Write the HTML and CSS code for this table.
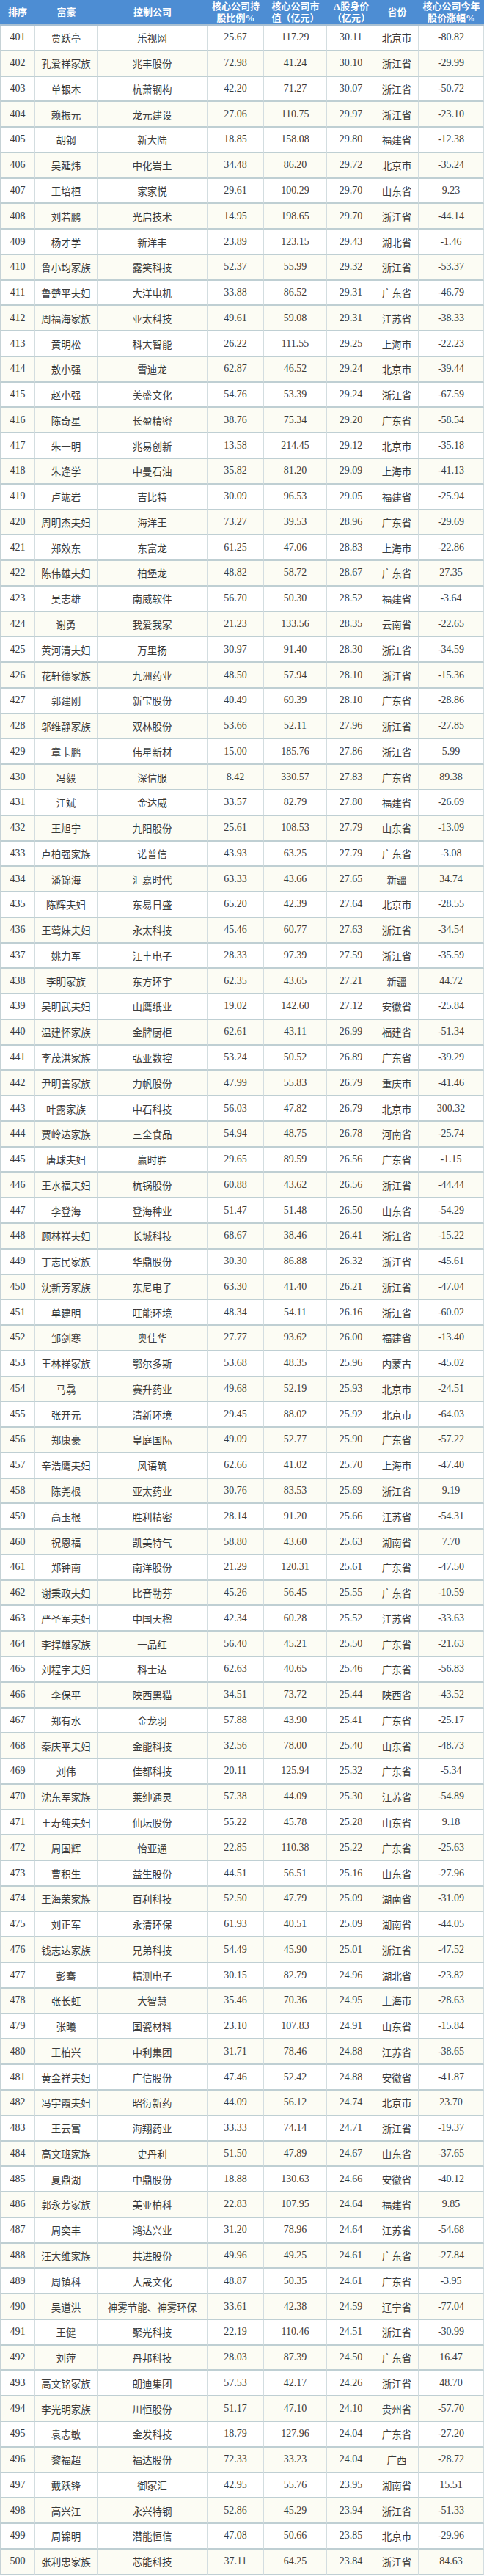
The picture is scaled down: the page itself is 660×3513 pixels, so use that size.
FILE: index.html
```html
<!DOCTYPE html>
<html lang="zh-CN">
<head>
<meta charset="utf-8">
<title>富豪榜 401-500</title>
<link rel="stylesheet" href="styles.css">
</head>
<body>
<table class="rank">
<colgroup>
<col class="c1"><col class="c2"><col class="c3"><col class="c4"><col class="c5"><col class="c6"><col class="c7"><col class="c8">
</colgroup>
<thead>
<tr><th>排序</th><th>富豪</th><th>控制公司</th><th>核心公司持<br>股比例%</th><th>核心公司市<br>值（亿元）</th><th>A股身价<br>（亿元）</th><th>省份</th><th>核心公司今年<br>股价涨幅%</th></tr>
</thead>
<tbody>
<tr><td>401</td><td>贾跃亭</td><td>乐视网</td><td>25.67</td><td>117.29</td><td>30.11</td><td>北京市</td><td>-80.82</td></tr>
<tr><td>402</td><td>孔爱祥家族</td><td>兆丰股份</td><td>72.98</td><td>41.24</td><td>30.10</td><td>浙江省</td><td>-29.99</td></tr>
<tr><td>403</td><td>单银木</td><td>杭萧钢构</td><td>42.20</td><td>71.27</td><td>30.07</td><td>浙江省</td><td>-50.72</td></tr>
<tr><td>404</td><td>赖振元</td><td>龙元建设</td><td>27.06</td><td>110.75</td><td>29.97</td><td>浙江省</td><td>-23.10</td></tr>
<tr><td>405</td><td>胡钢</td><td>新大陆</td><td>18.85</td><td>158.08</td><td>29.80</td><td>福建省</td><td>-12.38</td></tr>
<tr><td>406</td><td>吴延炜</td><td>中化岩土</td><td>34.48</td><td>86.20</td><td>29.72</td><td>北京市</td><td>-35.24</td></tr>
<tr><td>407</td><td>王培桓</td><td>家家悦</td><td>29.61</td><td>100.29</td><td>29.70</td><td>山东省</td><td>9.23</td></tr>
<tr><td>408</td><td>刘若鹏</td><td>光启技术</td><td>14.95</td><td>198.65</td><td>29.70</td><td>浙江省</td><td>-44.14</td></tr>
<tr><td>409</td><td>杨才学</td><td>新洋丰</td><td>23.89</td><td>123.15</td><td>29.43</td><td>湖北省</td><td>-1.46</td></tr>
<tr><td>410</td><td>鲁小均家族</td><td>露笑科技</td><td>52.37</td><td>55.99</td><td>29.32</td><td>浙江省</td><td>-53.37</td></tr>
<tr><td>411</td><td>鲁楚平夫妇</td><td>大洋电机</td><td>33.88</td><td>86.52</td><td>29.31</td><td>广东省</td><td>-46.79</td></tr>
<tr><td>412</td><td>周福海家族</td><td>亚太科技</td><td>49.61</td><td>59.08</td><td>29.31</td><td>江苏省</td><td>-38.33</td></tr>
<tr><td>413</td><td>黄明松</td><td>科大智能</td><td>26.22</td><td>111.55</td><td>29.25</td><td>上海市</td><td>-22.23</td></tr>
<tr><td>414</td><td>敖小强</td><td>雪迪龙</td><td>62.87</td><td>46.52</td><td>29.24</td><td>北京市</td><td>-39.44</td></tr>
<tr><td>415</td><td>赵小强</td><td>美盛文化</td><td>54.76</td><td>53.39</td><td>29.24</td><td>浙江省</td><td>-67.59</td></tr>
<tr><td>416</td><td>陈奇星</td><td>长盈精密</td><td>38.76</td><td>75.34</td><td>29.20</td><td>广东省</td><td>-58.54</td></tr>
<tr><td>417</td><td>朱一明</td><td>兆易创新</td><td>13.58</td><td>214.45</td><td>29.12</td><td>北京市</td><td>-35.18</td></tr>
<tr><td>418</td><td>朱逢学</td><td>中曼石油</td><td>35.82</td><td>81.20</td><td>29.09</td><td>上海市</td><td>-41.13</td></tr>
<tr><td>419</td><td>卢竑岩</td><td>吉比特</td><td>30.09</td><td>96.53</td><td>29.05</td><td>福建省</td><td>-25.94</td></tr>
<tr><td>420</td><td>周明杰夫妇</td><td>海洋王</td><td>73.27</td><td>39.53</td><td>28.96</td><td>广东省</td><td>-29.69</td></tr>
<tr><td>421</td><td>郑效东</td><td>东富龙</td><td>61.25</td><td>47.06</td><td>28.83</td><td>上海市</td><td>-22.86</td></tr>
<tr><td>422</td><td>陈伟雄夫妇</td><td>柏堡龙</td><td>48.82</td><td>58.72</td><td>28.67</td><td>广东省</td><td>27.35</td></tr>
<tr><td>423</td><td>吴志雄</td><td>南威软件</td><td>56.70</td><td>50.30</td><td>28.52</td><td>福建省</td><td>-3.64</td></tr>
<tr><td>424</td><td>谢勇</td><td>我爱我家</td><td>21.23</td><td>133.56</td><td>28.35</td><td>云南省</td><td>-22.65</td></tr>
<tr><td>425</td><td>黄河清夫妇</td><td>万里扬</td><td>30.97</td><td>91.40</td><td>28.30</td><td>浙江省</td><td>-34.59</td></tr>
<tr><td>426</td><td>花轩德家族</td><td>九洲药业</td><td>48.50</td><td>57.94</td><td>28.10</td><td>浙江省</td><td>-15.36</td></tr>
<tr><td>427</td><td>郭建刚</td><td>新宝股份</td><td>40.49</td><td>69.39</td><td>28.10</td><td>广东省</td><td>-28.86</td></tr>
<tr><td>428</td><td>邬维静家族</td><td>双林股份</td><td>53.66</td><td>52.11</td><td>27.96</td><td>浙江省</td><td>-27.85</td></tr>
<tr><td>429</td><td>章卡鹏</td><td>伟星新材</td><td>15.00</td><td>185.76</td><td>27.86</td><td>浙江省</td><td>5.99</td></tr>
<tr><td>430</td><td>冯毅</td><td>深信服</td><td>8.42</td><td>330.57</td><td>27.83</td><td>广东省</td><td>89.38</td></tr>
<tr><td>431</td><td>江斌</td><td>金达威</td><td>33.57</td><td>82.79</td><td>27.80</td><td>福建省</td><td>-26.69</td></tr>
<tr><td>432</td><td>王旭宁</td><td>九阳股份</td><td>25.61</td><td>108.53</td><td>27.79</td><td>山东省</td><td>-13.09</td></tr>
<tr><td>433</td><td>卢柏强家族</td><td>诺普信</td><td>43.93</td><td>63.25</td><td>27.79</td><td>广东省</td><td>-3.08</td></tr>
<tr><td>434</td><td>潘锦海</td><td>汇嘉时代</td><td>63.33</td><td>43.66</td><td>27.65</td><td>新疆</td><td>34.74</td></tr>
<tr><td>435</td><td>陈辉夫妇</td><td>东易日盛</td><td>65.20</td><td>42.39</td><td>27.64</td><td>北京市</td><td>-28.55</td></tr>
<tr><td>436</td><td>王莺妹夫妇</td><td>永太科技</td><td>45.46</td><td>60.77</td><td>27.63</td><td>浙江省</td><td>-34.54</td></tr>
<tr><td>437</td><td>姚力军</td><td>江丰电子</td><td>28.33</td><td>97.39</td><td>27.59</td><td>浙江省</td><td>-35.59</td></tr>
<tr><td>438</td><td>李明家族</td><td>东方环宇</td><td>62.35</td><td>43.65</td><td>27.21</td><td>新疆</td><td>44.72</td></tr>
<tr><td>439</td><td>吴明武夫妇</td><td>山鹰纸业</td><td>19.02</td><td>142.60</td><td>27.12</td><td>安徽省</td><td>-25.84</td></tr>
<tr><td>440</td><td>温建怀家族</td><td>金牌厨柜</td><td>62.61</td><td>43.11</td><td>26.99</td><td>福建省</td><td>-51.34</td></tr>
<tr><td>441</td><td>李茂洪家族</td><td>弘亚数控</td><td>53.24</td><td>50.52</td><td>26.89</td><td>广东省</td><td>-39.29</td></tr>
<tr><td>442</td><td>尹明善家族</td><td>力帆股份</td><td>47.99</td><td>55.83</td><td>26.79</td><td>重庆市</td><td>-41.46</td></tr>
<tr><td>443</td><td>叶露家族</td><td>中石科技</td><td>56.03</td><td>47.82</td><td>26.79</td><td>北京市</td><td>300.32</td></tr>
<tr><td>444</td><td>贾岭达家族</td><td>三全食品</td><td>54.94</td><td>48.75</td><td>26.78</td><td>河南省</td><td>-25.74</td></tr>
<tr><td>445</td><td>唐球夫妇</td><td>赢时胜</td><td>29.65</td><td>89.59</td><td>26.56</td><td>广东省</td><td>-1.15</td></tr>
<tr><td>446</td><td>王水福夫妇</td><td>杭锅股份</td><td>60.88</td><td>43.62</td><td>26.56</td><td>浙江省</td><td>-44.44</td></tr>
<tr><td>447</td><td>李登海</td><td>登海种业</td><td>51.47</td><td>51.48</td><td>26.50</td><td>山东省</td><td>-54.29</td></tr>
<tr><td>448</td><td>顾林祥夫妇</td><td>长城科技</td><td>68.67</td><td>38.46</td><td>26.41</td><td>浙江省</td><td>-15.22</td></tr>
<tr><td>449</td><td>丁志民家族</td><td>华鼎股份</td><td>30.30</td><td>86.88</td><td>26.32</td><td>浙江省</td><td>-45.61</td></tr>
<tr><td>450</td><td>沈新芳家族</td><td>东尼电子</td><td>63.30</td><td>41.40</td><td>26.21</td><td>浙江省</td><td>-47.04</td></tr>
<tr><td>451</td><td>单建明</td><td>旺能环境</td><td>48.34</td><td>54.11</td><td>26.16</td><td>浙江省</td><td>-60.02</td></tr>
<tr><td>452</td><td>邹剑寒</td><td>奥佳华</td><td>27.77</td><td>93.62</td><td>26.00</td><td>福建省</td><td>-13.40</td></tr>
<tr><td>453</td><td>王林祥家族</td><td>鄂尔多斯</td><td>53.68</td><td>48.35</td><td>25.96</td><td>内蒙古</td><td>-45.02</td></tr>
<tr><td>454</td><td>马骉</td><td>赛升药业</td><td>49.68</td><td>52.19</td><td>25.93</td><td>北京市</td><td>-24.51</td></tr>
<tr><td>455</td><td>张开元</td><td>清新环境</td><td>29.45</td><td>88.02</td><td>25.92</td><td>北京市</td><td>-64.03</td></tr>
<tr><td>456</td><td>郑康豪</td><td>皇庭国际</td><td>49.09</td><td>52.77</td><td>25.90</td><td>广东省</td><td>-57.22</td></tr>
<tr><td>457</td><td>辛浩鹰夫妇</td><td>风语筑</td><td>62.66</td><td>41.02</td><td>25.70</td><td>上海市</td><td>-47.40</td></tr>
<tr><td>458</td><td>陈尧根</td><td>亚太药业</td><td>30.76</td><td>83.53</td><td>25.69</td><td>浙江省</td><td>9.19</td></tr>
<tr><td>459</td><td>高玉根</td><td>胜利精密</td><td>28.14</td><td>91.20</td><td>25.66</td><td>江苏省</td><td>-54.31</td></tr>
<tr><td>460</td><td>祝恩福</td><td>凯美特气</td><td>58.80</td><td>43.60</td><td>25.63</td><td>湖南省</td><td>7.70</td></tr>
<tr><td>461</td><td>郑钟南</td><td>南洋股份</td><td>21.29</td><td>120.31</td><td>25.61</td><td>广东省</td><td>-47.50</td></tr>
<tr><td>462</td><td>谢秉政夫妇</td><td>比音勒芬</td><td>45.26</td><td>56.45</td><td>25.55</td><td>广东省</td><td>-10.59</td></tr>
<tr><td>463</td><td>严圣军夫妇</td><td>中国天楹</td><td>42.34</td><td>60.28</td><td>25.52</td><td>江苏省</td><td>-33.63</td></tr>
<tr><td>464</td><td>李捍雄家族</td><td>一品红</td><td>56.40</td><td>45.21</td><td>25.50</td><td>广东省</td><td>-21.63</td></tr>
<tr><td>465</td><td>刘程宇夫妇</td><td>科士达</td><td>62.63</td><td>40.65</td><td>25.46</td><td>广东省</td><td>-56.83</td></tr>
<tr><td>466</td><td>李保平</td><td>陕西黑猫</td><td>34.51</td><td>73.72</td><td>25.44</td><td>陕西省</td><td>-43.52</td></tr>
<tr><td>467</td><td>郑有水</td><td>金龙羽</td><td>57.88</td><td>43.90</td><td>25.41</td><td>广东省</td><td>-25.17</td></tr>
<tr><td>468</td><td>秦庆平夫妇</td><td>金能科技</td><td>32.56</td><td>78.00</td><td>25.40</td><td>山东省</td><td>-48.73</td></tr>
<tr><td>469</td><td>刘伟</td><td>佳都科技</td><td>20.11</td><td>125.94</td><td>25.32</td><td>广东省</td><td>-5.34</td></tr>
<tr><td>470</td><td>沈东军家族</td><td>莱绅通灵</td><td>57.38</td><td>44.09</td><td>25.30</td><td>江苏省</td><td>-54.89</td></tr>
<tr><td>471</td><td>王寿纯夫妇</td><td>仙坛股份</td><td>55.22</td><td>45.78</td><td>25.28</td><td>山东省</td><td>9.18</td></tr>
<tr><td>472</td><td>周国辉</td><td>怡亚通</td><td>22.85</td><td>110.38</td><td>25.22</td><td>广东省</td><td>-25.63</td></tr>
<tr><td>473</td><td>曹积生</td><td>益生股份</td><td>44.51</td><td>56.51</td><td>25.16</td><td>山东省</td><td>-27.96</td></tr>
<tr><td>474</td><td>王海荣家族</td><td>百利科技</td><td>52.50</td><td>47.79</td><td>25.09</td><td>湖南省</td><td>-31.09</td></tr>
<tr><td>475</td><td>刘正军</td><td>永清环保</td><td>61.93</td><td>40.51</td><td>25.09</td><td>湖南省</td><td>-44.05</td></tr>
<tr><td>476</td><td>钱志达家族</td><td>兄弟科技</td><td>54.49</td><td>45.90</td><td>25.01</td><td>浙江省</td><td>-47.52</td></tr>
<tr><td>477</td><td>彭骞</td><td>精测电子</td><td>30.15</td><td>82.79</td><td>24.96</td><td>湖北省</td><td>-23.82</td></tr>
<tr><td>478</td><td>张长虹</td><td>大智慧</td><td>35.46</td><td>70.36</td><td>24.95</td><td>上海市</td><td>-28.63</td></tr>
<tr><td>479</td><td>张曦</td><td>国瓷材料</td><td>23.10</td><td>107.83</td><td>24.91</td><td>山东省</td><td>-15.84</td></tr>
<tr><td>480</td><td>王柏兴</td><td>中利集团</td><td>31.71</td><td>78.46</td><td>24.88</td><td>江苏省</td><td>-38.65</td></tr>
<tr><td>481</td><td>黄金祥夫妇</td><td>广信股份</td><td>47.46</td><td>52.42</td><td>24.88</td><td>安徽省</td><td>-41.87</td></tr>
<tr><td>482</td><td>冯宇霞夫妇</td><td>昭衍新药</td><td>44.09</td><td>56.12</td><td>24.74</td><td>北京市</td><td>23.70</td></tr>
<tr><td>483</td><td>王云富</td><td>海翔药业</td><td>33.33</td><td>74.14</td><td>24.71</td><td>浙江省</td><td>-19.37</td></tr>
<tr><td>484</td><td>高文班家族</td><td>史丹利</td><td>51.50</td><td>47.89</td><td>24.67</td><td>山东省</td><td>-37.65</td></tr>
<tr><td>485</td><td>夏鼎湖</td><td>中鼎股份</td><td>18.88</td><td>130.63</td><td>24.66</td><td>安徽省</td><td>-40.12</td></tr>
<tr><td>486</td><td>郭永芳家族</td><td>美亚柏科</td><td>22.83</td><td>107.95</td><td>24.64</td><td>福建省</td><td>9.85</td></tr>
<tr><td>487</td><td>周奕丰</td><td>鸿达兴业</td><td>31.20</td><td>78.96</td><td>24.64</td><td>江苏省</td><td>-54.68</td></tr>
<tr><td>488</td><td>汪大维家族</td><td>共进股份</td><td>49.96</td><td>49.25</td><td>24.61</td><td>广东省</td><td>-27.84</td></tr>
<tr><td>489</td><td>周镇科</td><td>大晟文化</td><td>48.87</td><td>50.35</td><td>24.61</td><td>广东省</td><td>-3.95</td></tr>
<tr><td>490</td><td>吴道洪</td><td>神雾节能、神雾环保</td><td>33.61</td><td>42.38</td><td>24.59</td><td>辽宁省</td><td>-77.04</td></tr>
<tr><td>491</td><td>王健</td><td>聚光科技</td><td>22.19</td><td>110.46</td><td>24.51</td><td>浙江省</td><td>-30.99</td></tr>
<tr><td>492</td><td>刘萍</td><td>丹邦科技</td><td>28.03</td><td>87.39</td><td>24.50</td><td>广东省</td><td>16.47</td></tr>
<tr><td>493</td><td>高文铭家族</td><td>朗迪集团</td><td>57.53</td><td>42.17</td><td>24.26</td><td>浙江省</td><td>48.70</td></tr>
<tr><td>494</td><td>李光明家族</td><td>川恒股份</td><td>51.17</td><td>47.10</td><td>24.10</td><td>贵州省</td><td>-57.70</td></tr>
<tr><td>495</td><td>袁志敏</td><td>金发科技</td><td>18.79</td><td>127.96</td><td>24.04</td><td>广东省</td><td>-27.20</td></tr>
<tr><td>496</td><td>黎福超</td><td>福达股份</td><td>72.33</td><td>33.23</td><td>24.04</td><td>广西</td><td>-28.72</td></tr>
<tr><td>497</td><td>戴跃锋</td><td>御家汇</td><td>42.95</td><td>55.76</td><td>23.95</td><td>湖南省</td><td>15.51</td></tr>
<tr><td>498</td><td>高兴江</td><td>永兴特钢</td><td>52.86</td><td>45.29</td><td>23.94</td><td>浙江省</td><td>-51.33</td></tr>
<tr><td>499</td><td>周锦明</td><td>潜能恒信</td><td>47.08</td><td>50.66</td><td>23.85</td><td>北京市</td><td>-29.96</td></tr>
<tr><td>500</td><td>张利忠家族</td><td>芯能科技</td><td>37.11</td><td>64.25</td><td>23.84</td><td>浙江省</td><td>84.63</td></tr>
</tbody>
</table>
</body>
</html>
```

FILE: styles.css
```css
html, body {
  margin: 0;
  padding: 0;
  background: #ffffff;
}

.rank {
  width: 660px;
  table-layout: fixed;
  border-collapse: separate;
  border-spacing: 0;
  font-family: "Liberation Serif", "Noto Sans CJK SC", serif;
  color: #3a3a3a;
}

.c1 { width: 48px; }
.c2 { width: 85px; }
.c3 { width: 150px; }
.c4 { width: 77px; }
.c5 { width: 86px; }
.c6 { width: 66px; }
.c7 { width: 59px; }
.c8 { width: 89px; }

.rank th {
  box-sizing: border-box;
  height: 35px;
  padding: 0;
  background: #4d8dd3;
  color: #ffffff;
  font-size: 13px;
  font-weight: bold;
  line-height: 16px;
  text-align: center;
  vertical-align: middle;
  border-bottom: 2px solid #a9c0d2;
}

.rank td {
  box-sizing: border-box;
  height: 34.78px;
  padding: 0;
  font-size: 13.5px;
  text-align: center;
  vertical-align: middle;
  white-space: nowrap;
  border-bottom: 2px solid #bfcfd3;
  border-right: 1px solid #d3dde0;
}

.rank td:first-child {
  border-left: 1px solid #c6d2d6;
}

.rank tbody tr:nth-child(even) td {
  background: #fcfcf4;
}

.rank td:nth-child(n+4):nth-child(-n+6),
.rank td:nth-child(8),
.rank td:first-child {
  font-size: 14px;
}
```
